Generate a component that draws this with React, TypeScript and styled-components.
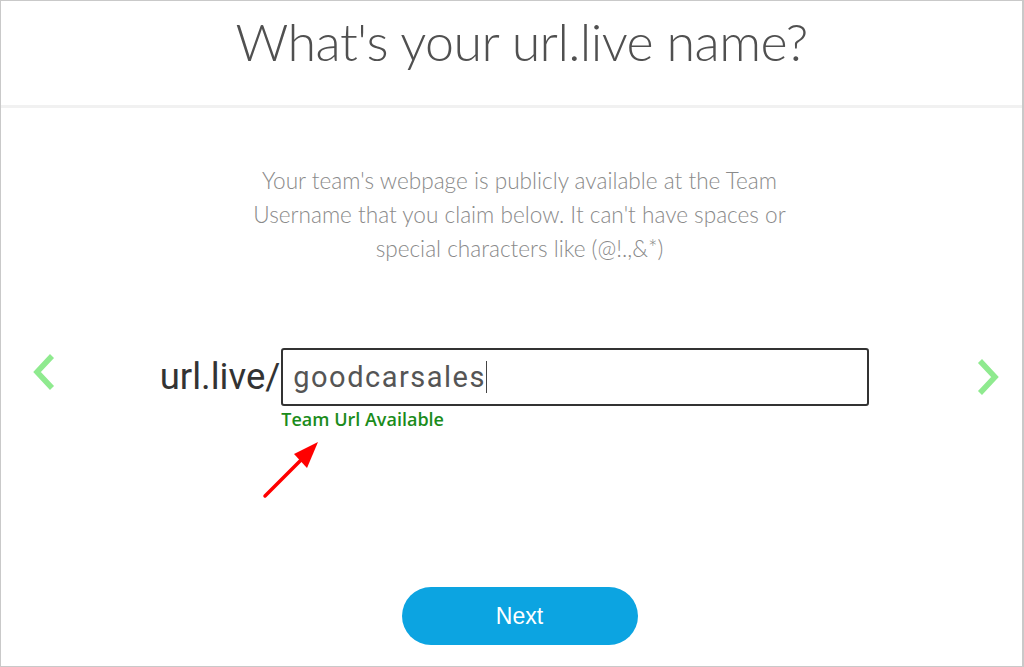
import React from "react";
import styled, { createGlobalStyle } from "styled-components";

const GlobalStyle = createGlobalStyle`
  html, body {
    margin: 0;
    padding: 0;
    background: #fff;
  }
  * {
    box-sizing: border-box;
  }
`;

const ChevronLeft = () => (
  <svg width="24" height="40" viewBox="0 0 24 40">
    <polyline points="20,4 5,20 20,36" fill="none" stroke="#8fea8f" strokeWidth="5.5" strokeLinecap="butt" />
  </svg>
);

const ChevronRight = () => (
  <svg width="24" height="40" viewBox="0 0 24 40">
    <polyline points="4,4 19,20 4,36" fill="none" stroke="#8fea8f" strokeWidth="5.5" strokeLinecap="butt" />
  </svg>
);

export default function App() {
  return (
    <>
      <GlobalStyle />
      <Frame>
        <Header>
          <Title>What's your url.live name?</Title>
        </Header>
        <Body>
          <Intro>
            Your team's webpage is publicly available at the Team<br />
            Username that you claim below. It can't have spaces or<br />
            special characters like (@!.,&amp;*)
          </Intro>
          <UrlRow>
            <NavButton $side="left"><ChevronLeft /></NavButton>
            <UrlGroup>
              <Prefix>url.live/</Prefix>
              <Field>
                <Input>
                  goodcarsales<Caret />
                </Input>
                <Status>Team Url Available</Status>
              </Field>
            </UrlGroup>
            <NavButton $side="right"><ChevronRight /></NavButton>
          </UrlRow>
          <NextButton>Next</NextButton>
          <Arrow width="70" height="70" viewBox="0 0 70 70">
            <line x1="6" y1="64" x2="44" y2="26" stroke="#ff0000" strokeWidth="3.5" strokeLinecap="round" />
            <polygon points="59,10 35,22 48,36" fill="#ff0000" />
          </Arrow>
        </Body>
      </Frame>
    </>
  );
}

const Frame = styled.div`
  width: 1024px;
  height: 667px;
  border: 1px solid #c9c9c9;
  border-right-width: 2px;
  display: flex;
  flex-direction: column;
  overflow: hidden;
  background: #fff;
`;

const Header = styled.div`
  height: 107px;
  flex-shrink: 0;
  border-bottom: 3px solid #f1f1f1;
  display: flex;
  justify-content: center;
  padding: 4px 0 0 20px;
`;

const Title = styled.h1`
  margin: 0;
  font-family: "Lato", "Open Sans", sans-serif;
  font-weight: 300;
  font-size: 52px;
  line-height: 72px;
  color: #505050;
  letter-spacing: -0.6px;
`;

const Body = styled.div`
  position: relative;
  flex: 1;
  display: flex;
  flex-direction: column;
  align-items: center;
  padding-top: 56px;
`;

const Intro = styled.p`
  margin: 0 0 0 16px;
  font-family: "Lato", "Open Sans", sans-serif;
  font-weight: 300;
  font-size: 22.6px;
  line-height: 34px;
  color: #8a8a8a;
  text-align: center;
`;

const UrlRow = styled.div`
  width: 100%;
  margin-top: 82px;
  padding-left: 6px;
  display: grid;
  grid-template-columns: 1fr auto 1fr;
  align-items: start;
`;

const NavButton = styled.div<{ $side: "left" | "right" }>`
  display: flex;
  justify-content: ${(p) => (p.$side === "left" ? "flex-start" : "flex-end")};
  padding: ${(p) => (p.$side === "left" ? "4px 0 0 25px" : "9px 22px 0 0")};
`;

const UrlGroup = styled.div`
  display: flex;
  align-items: flex-start;
`;

const Prefix = styled.span`
  font-family: "Roboto", "Liberation Sans", sans-serif;
  font-size: 36.5px;
  line-height: 58px;
  color: #333;
  margin-right: 1px;
`;

const Field = styled.div`
  display: flex;
  flex-direction: column;
`;

const Input = styled.div`
  width: 588px;
  height: 58px;
  border: 2px solid #333;
  border-radius: 3px;
  padding: 0 10px;
  display: flex;
  align-items: center;
  font-family: "Roboto", "Liberation Sans", sans-serif;
  font-size: 29px;
  letter-spacing: 1.5px;
  color: #555;
`;

const Caret = styled.span`
  display: inline-block;
  width: 1px;
  height: 32px;
  background: #444;
  margin-left: 0;
`;

const Status = styled.div`
  margin-top: 2px;
  font-family: "Open Sans", "Liberation Sans", sans-serif;
  font-weight: 600;
  font-size: 18px;
  line-height: 22px;
  color: #1b8c1b;
`;

const NextButton = styled.button`
  margin: 157px 0 0 16px;
  width: 236px;
  height: 58px;
  border: none;
  border-radius: 29px;
  background: #0ca4e1;
  color: #fff;
  font-family: "Liberation Sans", Arial, sans-serif;
  font-size: 23px;
  cursor: pointer;
`;

const Arrow = styled.svg`
  position: absolute;
  left: 258px;
  top: 324px;
`;
